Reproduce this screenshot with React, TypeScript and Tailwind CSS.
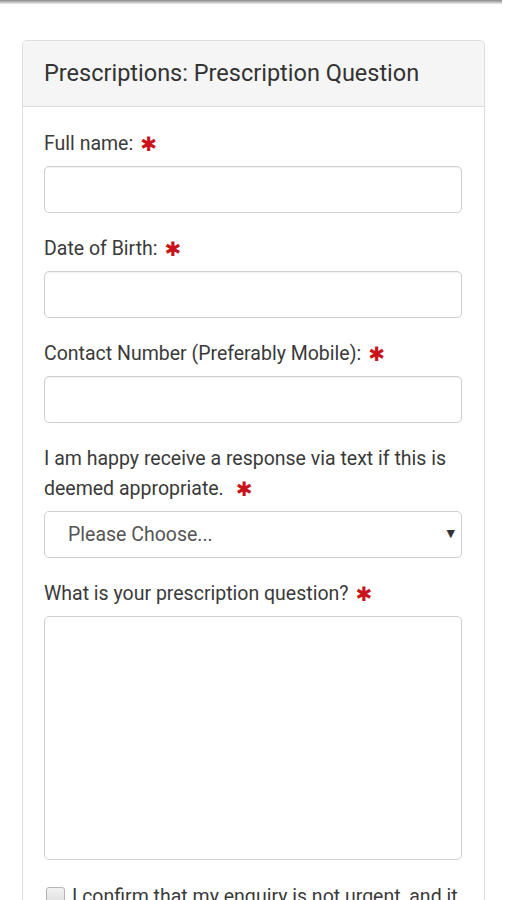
import React from "react";

const Star = ({ gap = 7 }: { gap?: number }) => (
  <span
    className={`text-[#c9141b] text-[20px] leading-none align-[-1px] font-bold ${gap === 7 ? "ml-[7px]" : "ml-[12px]"}`}
    style={{ fontFamily: "'DejaVu Sans', sans-serif" }}
  >
    ✱
  </span>
);

const Field = ({ label, children }: { label: React.ReactNode; children: React.ReactNode }) => (
  <div className="mb-[21px]">
    <div className="text-[19.5px] leading-[30px] text-[#3a3a3a] mb-[7px]">{label}</div>
    {children}
  </div>
);

const Input = () => (
  <div className="h-[47px] rounded-[5px] border border-[#cfcfcf] bg-white shadow-[inset_0_1px_1px_rgba(0,0,0,0.06)]" />
);

export default function App() {
  return (
    <div className="h-[900px] bg-white overflow-hidden" style={{ fontFamily: "Roboto, 'Liberation Sans', sans-serif" }}>
      <div className="h-[4px] bg-gradient-to-b from-[#8a8a8a] to-[#ededed] mr-[4px]" />
      <div className="px-[22px] pt-[36px]">
        <div className="w-[463px] border border-[#dedede] rounded-[5px] bg-white">
          <div className="h-[66px] bg-[#f5f5f5] border-b border-[#dcdcdc] rounded-t-[5px] flex items-center px-[21px]">
            <span className="text-[23.5px] text-[#333]">Prescriptions: Prescription Question</span>
          </div>
          <div className="pl-[21px] pr-[22px] pt-[22px]">
            <Field label={<>Full name:<Star /></>}><Input /></Field>
            <Field label={<>Date of Birth:<Star /></>}><Input /></Field>
            <Field label={<>Contact Number (Preferably Mobile):<Star /></>}><Input /></Field>
            <Field label={<>I am happy receive a response via text if this is deemed appropriate.<Star gap={12} /></>}>
              <div className="h-[47px] rounded-[5px] border border-[#cfcfcf] bg-white flex items-center justify-between pl-[23px] pr-[6px]">
                <span className="text-[19.5px] text-[#555]">Please Choose...</span>
                <span className="text-[11px] text-[#333]" style={{ fontFamily: "'DejaVu Sans', sans-serif" }}>▼</span>
              </div>
            </Field>
            <Field label={<>What is your prescription question?<Star /></>}>
              <div className="h-[244px] rounded-[5px] border border-[#cfcfcf] bg-white" />
            </Field>
            <div className="flex items-start pt-[1px]">
              <div className="w-[19px] h-[19px] ml-[2px] mt-[5px] rounded-[3px] border border-[#b5b5b5] bg-gradient-to-b from-[#f2f2f2] to-[#dcdcdc] shrink-0" />
              <div className="ml-[7px] text-[19.5px] leading-[30px] text-[#3a3a3a]">I confirm that my enquiry is not urgent, and it may take up to 3 working days to be answered.</div>
            </div>
          </div>
        </div>
      </div>
    </div>
  );
}
